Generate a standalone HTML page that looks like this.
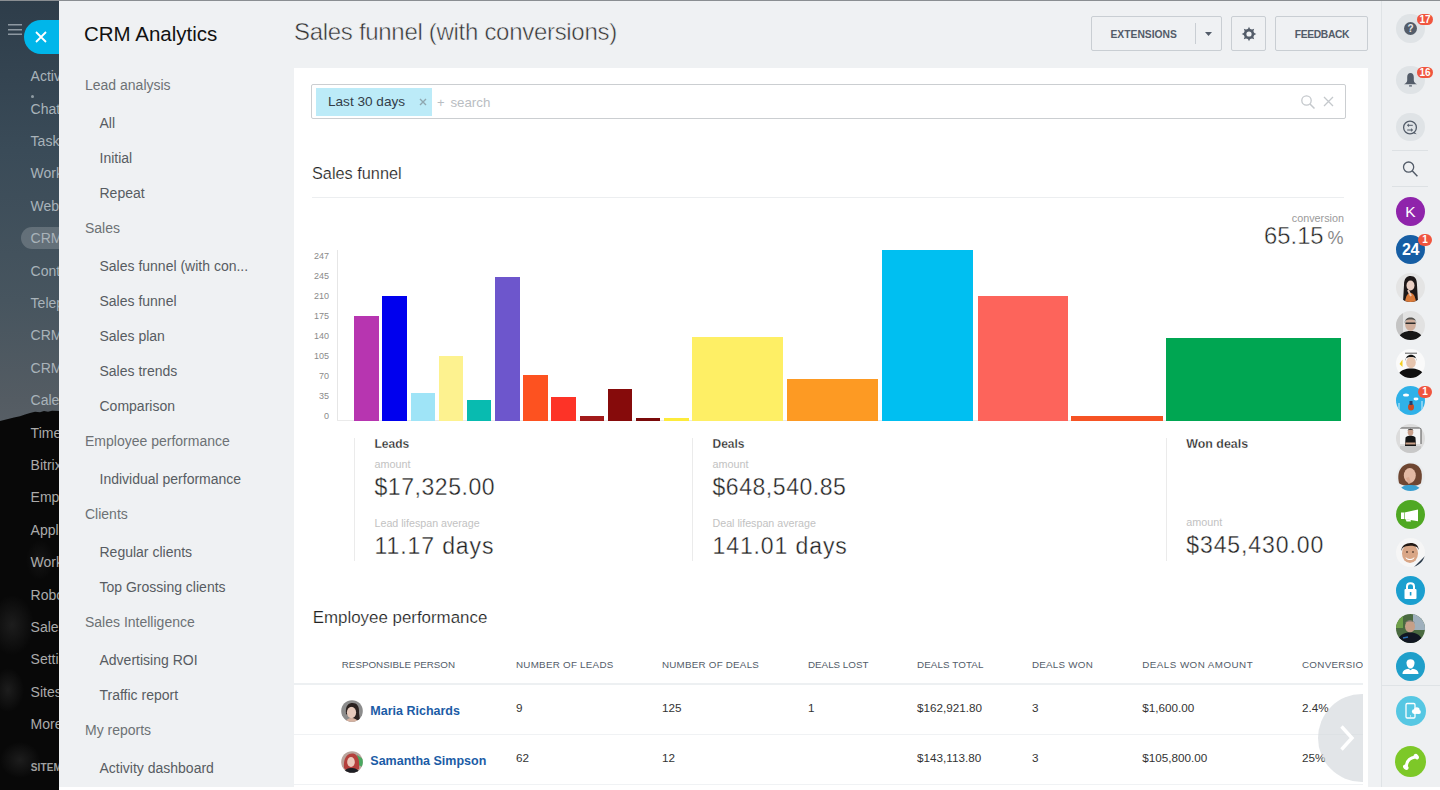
<!DOCTYPE html>
<html><head><meta charset="utf-8"><title>CRM Analytics</title>
<style>
html,body{margin:0;padding:0;width:1440px;height:790px;overflow:hidden;background:#eef0f3;font-family:'Liberation Sans', sans-serif}
.t{position:absolute;white-space:nowrap;font-family:'Liberation Sans', sans-serif}
.r{position:absolute}
</style></head><body>
<div class="r" style="left:0;top:0;width:59px;height:790px;background:linear-gradient(180deg,#2e3d4a 0px,#3a4b58 150px,#47555f 300px,#545c63 400px,#575e65 425px);overflow:hidden">
<svg width="59" height="790" style="position:absolute;left:0;top:0">
<defs><radialGradient id="tx"><stop offset="0" stop-color="#262626" stop-opacity="0.7"/><stop offset="1" stop-color="#262626" stop-opacity="0"/></radialGradient></defs><path d="M0 421 L8 419 L14 417.5 L20 416.3 L25 414.5 L30 413 L35 411.8 L40 412.3 L44 411 L48 411.8 L52 410.8 L59 411 L59 790 L0 790 Z" fill="#080808"/><ellipse cx="12" cy="625" rx="22" ry="30" fill="url(#tx)"/><ellipse cx="8" cy="690" rx="16" ry="22" fill="url(#tx)"/><ellipse cx="20" cy="760" rx="20" ry="18" fill="url(#tx)"/><ellipse cx="40" cy="560" rx="14" ry="20" fill="url(#tx)" opacity="0.6"/>
</svg></div>
<div class="r" style="left:21px;top:226.5px;width:60px;height:22px;border-radius:11px;background:rgba(255,255,255,0.18)"></div>
<div class="t" style="left:30.60px;top:69.10px;font-size:14px;line-height:14px;color:#a9b3ba;font-weight:400;letter-spacing:0px;">Activ</div>
<div class="t" style="left:30.60px;top:101.50px;font-size:14px;line-height:14px;color:#a9b3ba;font-weight:400;letter-spacing:0px;">Chat</div>
<div class="t" style="left:30.60px;top:133.90px;font-size:14px;line-height:14px;color:#a9b3ba;font-weight:400;letter-spacing:0px;">Task</div>
<div class="t" style="left:30.60px;top:166.30px;font-size:14px;line-height:14px;color:#a9b3ba;font-weight:400;letter-spacing:0px;">Work</div>
<div class="t" style="left:30.60px;top:198.70px;font-size:14px;line-height:14px;color:#a9b3ba;font-weight:400;letter-spacing:0px;">Web</div>
<div class="t" style="left:30.60px;top:231.10px;font-size:14px;line-height:14px;color:#a9b3ba;font-weight:400;letter-spacing:0px;">CRM</div>
<div class="t" style="left:30.60px;top:263.50px;font-size:14px;line-height:14px;color:#a9b3ba;font-weight:400;letter-spacing:0px;">Cont</div>
<div class="t" style="left:30.60px;top:295.90px;font-size:14px;line-height:14px;color:#a9b3ba;font-weight:400;letter-spacing:0px;">Telep</div>
<div class="t" style="left:30.60px;top:328.30px;font-size:14px;line-height:14px;color:#a9b3ba;font-weight:400;letter-spacing:0px;">CRM</div>
<div class="t" style="left:30.60px;top:360.70px;font-size:14px;line-height:14px;color:#a9b3ba;font-weight:400;letter-spacing:0px;">CRM</div>
<div class="t" style="left:30.60px;top:393.10px;font-size:14px;line-height:14px;color:#a9b3ba;font-weight:400;letter-spacing:0px;">Cale</div>
<div class="t" style="left:30.60px;top:425.50px;font-size:14px;line-height:14px;color:#ababab;font-weight:400;letter-spacing:0px;">Time</div>
<div class="t" style="left:30.60px;top:457.90px;font-size:14px;line-height:14px;color:#ababab;font-weight:400;letter-spacing:0px;">Bitrix</div>
<div class="t" style="left:30.60px;top:490.30px;font-size:14px;line-height:14px;color:#ababab;font-weight:400;letter-spacing:0px;">Emp</div>
<div class="t" style="left:30.60px;top:522.70px;font-size:14px;line-height:14px;color:#ababab;font-weight:400;letter-spacing:0px;">Appl</div>
<div class="t" style="left:30.60px;top:555.10px;font-size:14px;line-height:14px;color:#ababab;font-weight:400;letter-spacing:0px;">Work</div>
<div class="t" style="left:30.60px;top:587.50px;font-size:14px;line-height:14px;color:#ababab;font-weight:400;letter-spacing:0px;">Robo</div>
<div class="t" style="left:30.60px;top:619.90px;font-size:14px;line-height:14px;color:#ababab;font-weight:400;letter-spacing:0px;">Sales</div>
<div class="t" style="left:30.60px;top:652.30px;font-size:14px;line-height:14px;color:#ababab;font-weight:400;letter-spacing:0px;">Setti</div>
<div class="t" style="left:30.60px;top:684.70px;font-size:14px;line-height:14px;color:#ababab;font-weight:400;letter-spacing:0px;">Sites</div>
<div class="t" style="left:30.60px;top:717.10px;font-size:14px;line-height:14px;color:#ababab;font-weight:400;letter-spacing:0px;">More</div>
<div class="r" style="left:30.5px;top:95px;width:3px;height:3px;border-radius:50%;background:#8f9ba3"></div>
<div class="t" style="left:30.80px;top:763.00px;font-size:10px;line-height:10px;color:#a0a0a0;font-weight:700;letter-spacing:0.1px;">SITEMAP</div>
<svg class="r" style="left:7px;top:22px" width="16" height="14"><path d="M1 2.8 L15 2.8 M1 7.8 L15 7.8 M1 12.3 L15 12.3" stroke="#8d98a1" stroke-width="1.5"/></svg>
<div class="r" style="left:59px;top:0px;width:1322px;height:790px;background:#eff1f3;"></div>
<div class="r" style="left:1381px;top:0px;width:59px;height:790px;background:#eef0f2;border-left:1px solid #dfe3e6;box-sizing:border-box"></div>
<div class="r" style="left:0px;top:0px;width:1440px;height:1px;background:#8a8e92;"></div>
<div class="r" style="left:24px;top:20px;width:35px;height:34px;border-radius:17px 0 0 17px;background:#00b6ea"></div>
<svg class="r" style="left:35px;top:31px" width="12" height="12"><path d="M1 1 L11 11 M11 1 L1 11" stroke="#fff" stroke-width="1.8"/></svg>
<div class="t" style="left:84.00px;top:23.57px;font-size:20.5px;line-height:20.5px;color:#111;font-weight:400;letter-spacing:0px;">CRM Analytics</div>
<div class="t" style="left:85.00px;top:77.60px;font-size:14px;line-height:14px;color:#6d7175;font-weight:400;letter-spacing:0px;">Lead analysis</div>
<div class="t" style="left:99.50px;top:115.60px;font-size:14px;line-height:14px;color:#575c62;font-weight:400;letter-spacing:0px;">All</div>
<div class="t" style="left:99.50px;top:150.60px;font-size:14px;line-height:14px;color:#575c62;font-weight:400;letter-spacing:0px;">Initial</div>
<div class="t" style="left:99.50px;top:185.60px;font-size:14px;line-height:14px;color:#575c62;font-weight:400;letter-spacing:0px;">Repeat</div>
<div class="t" style="left:85.00px;top:220.60px;font-size:14px;line-height:14px;color:#6d7175;font-weight:400;letter-spacing:0px;">Sales</div>
<div class="t" style="left:99.50px;top:258.60px;font-size:14px;line-height:14px;color:#575c62;font-weight:400;letter-spacing:0px;">Sales funnel (with con...</div>
<div class="t" style="left:99.50px;top:293.60px;font-size:14px;line-height:14px;color:#575c62;font-weight:400;letter-spacing:0px;">Sales funnel</div>
<div class="t" style="left:99.50px;top:328.60px;font-size:14px;line-height:14px;color:#575c62;font-weight:400;letter-spacing:0px;">Sales plan</div>
<div class="t" style="left:99.50px;top:363.60px;font-size:14px;line-height:14px;color:#575c62;font-weight:400;letter-spacing:0px;">Sales trends</div>
<div class="t" style="left:99.50px;top:398.60px;font-size:14px;line-height:14px;color:#575c62;font-weight:400;letter-spacing:0px;">Comparison</div>
<div class="t" style="left:85.00px;top:433.60px;font-size:14px;line-height:14px;color:#6d7175;font-weight:400;letter-spacing:0px;">Employee performance</div>
<div class="t" style="left:99.50px;top:471.60px;font-size:14px;line-height:14px;color:#575c62;font-weight:400;letter-spacing:0px;">Individual performance</div>
<div class="t" style="left:85.00px;top:506.60px;font-size:14px;line-height:14px;color:#6d7175;font-weight:400;letter-spacing:0px;">Clients</div>
<div class="t" style="left:99.50px;top:544.60px;font-size:14px;line-height:14px;color:#575c62;font-weight:400;letter-spacing:0px;">Regular clients</div>
<div class="t" style="left:99.50px;top:579.60px;font-size:14px;line-height:14px;color:#575c62;font-weight:400;letter-spacing:0px;">Top Grossing clients</div>
<div class="t" style="left:85.00px;top:614.60px;font-size:14px;line-height:14px;color:#6d7175;font-weight:400;letter-spacing:0px;">Sales Intelligence</div>
<div class="t" style="left:99.50px;top:652.60px;font-size:14px;line-height:14px;color:#575c62;font-weight:400;letter-spacing:0px;">Advertising ROI</div>
<div class="t" style="left:99.50px;top:687.60px;font-size:14px;line-height:14px;color:#575c62;font-weight:400;letter-spacing:0px;">Traffic report</div>
<div class="t" style="left:85.00px;top:722.60px;font-size:14px;line-height:14px;color:#6d7175;font-weight:400;letter-spacing:0px;">My reports</div>
<div class="t" style="left:99.50px;top:760.60px;font-size:14px;line-height:14px;color:#575c62;font-weight:400;letter-spacing:0px;">Activity dashboard</div>
<div class="t" style="left:294.00px;top:19.60px;font-size:24px;line-height:24px;color:#333;font-weight:400;letter-spacing:-0.3px;-webkit-text-stroke:0.5px #eff1f3;">Sales funnel (with conversions)</div>
<div class="r" style="left:1091px;top:16px;width:131px;height:35px;border:1px solid #c9ced3;border-radius:2px;box-sizing:border-box"></div>
<div class="r" style="left:1195px;top:23px;width:1px;height:21px;background:#c9ced3;"></div>
<svg class="r" style="left:1205px;top:32px" width="7" height="4"><path d="M0 0 L7 0 L3.5 4 Z" fill="#535c69"/></svg>
<div class="t" style="left:1110.50px;top:30.24px;font-size:10.3px;line-height:10.3px;color:#535c69;font-weight:700;letter-spacing:0px;">EXTENSIONS</div>
<div class="r" style="left:1231px;top:16px;width:35px;height:35px;border:1px solid #c9ced3;border-radius:2px;box-sizing:border-box"></div>
<svg class="r" style="left:1240.8px;top:25.8px" width="16" height="16"><path fill-rule="evenodd" fill="#535c69" d="M6.05 3.29 L7.06 2.68 L8.00 0.70 L8.94 2.68 L9.95 3.29 L11.10 3.58 L13.16 2.84 L12.42 4.90 L12.71 6.05 L13.32 7.06 L15.30 8.00 L13.32 8.94 L12.71 9.95 L12.42 11.10 L13.16 13.16 L11.10 12.42 L9.95 12.71 L8.94 13.32 L8.00 15.30 L7.06 13.32 L6.05 12.71 L4.90 12.42 L2.84 13.16 L3.58 11.10 L3.29 9.95 L2.68 8.94 L0.70 8.00 L2.68 7.06 L3.29 6.05 L3.58 4.90 L2.84 2.84 L4.90 3.58 Z M8 5.4 A2.6 2.6 0 1 0 8 10.6 A2.6 2.6 0 1 0 8 5.4 Z"/></svg>
<div class="r" style="left:1275px;top:16px;width:93px;height:35px;border:1px solid #c9ced3;border-radius:2px;box-sizing:border-box"></div>
<div class="t" style="left:1294.75px;top:30.24px;font-size:10.3px;line-height:10.3px;color:#535c69;font-weight:700;letter-spacing:-0.35px;">FEEDBACK</div>
<div class="r" style="left:294px;top:68px;width:1074px;height:720px;background:#ffffff;"></div>
<div class="r" style="left:311px;top:84px;width:1035px;height:35px;border:1px solid #cbced1;border-radius:2px;box-sizing:border-box;background:#fff"></div>
<div class="r" style="left:316px;top:88px;width:116px;height:28px;background:#bcebf8;"></div>
<div class="t" style="left:328.00px;top:95.44px;font-size:13.6px;line-height:13.6px;color:#333d48;font-weight:400;letter-spacing:0px;">Last 30 days</div>
<svg class="r" style="left:419px;top:98px" width="8" height="8"><path d="M1 1 L7 7 M7 1 L1 7" stroke="#8fa7b0" stroke-width="1.4"/></svg>
<div class="t" style="left:437.00px;top:95.95px;font-size:13px;line-height:13px;color:#b9bdc2;font-weight:400;letter-spacing:0px;">+</div>
<div class="t" style="left:450.40px;top:95.69px;font-size:13.3px;line-height:13.3px;color:#b9bdc2;font-weight:400;letter-spacing:0px;">search</div>
<svg class="r" style="left:1300px;top:94px" width="16" height="16"><circle cx="6.5" cy="6.5" r="4.7" fill="none" stroke="#c4c8cc" stroke-width="1.3"/><path d="M10 10 L14.5 14.5" stroke="#c4c8cc" stroke-width="1.5"/></svg>
<svg class="r" style="left:1323px;top:96px" width="11" height="11"><path d="M1 1 L10 10 M10 1 L1 10" stroke="#c4c8cc" stroke-width="1.3"/></svg>
<div class="t" style="left:312.00px;top:165.15px;font-size:16.3px;line-height:16.3px;color:#222;font-weight:400;letter-spacing:0px;-webkit-text-stroke:0.2px #fff;">Sales funnel</div>
<div class="r" style="left:312px;top:197px;width:1032px;height:1px;background:#eceef0;"></div>
<div class="t" style="right:96.00px;top:213.32px;font-size:10.8px;line-height:10.8px;color:#9a9a9a;font-weight:400;letter-spacing:0px;">conversion</div>
<div class="t" style="right:116.40px;top:224.07px;font-size:23.8px;line-height:23.8px;color:#222;font-weight:400;letter-spacing:0px;-webkit-text-stroke:0.45px #fff;">65.15</div>
<div class="t" style="right:96.50px;top:229.00px;font-size:18px;line-height:18px;color:#8a8a8a;font-weight:400;letter-spacing:0px;">%</div>
<div class="r" style="left:337px;top:250px;width:1px;height:171px;background:#e6e6e6;"></div>
<div class="r" style="left:337px;top:420px;width:1004px;height:1px;background:#eaeaea;"></div>
<div class="t" style="right:1111.00px;top:252.05px;font-size:9px;line-height:9px;color:#8a8a8a;font-weight:400;letter-spacing:0px;">247</div>
<div class="t" style="right:1111.00px;top:271.65px;font-size:9px;line-height:9px;color:#8a8a8a;font-weight:400;letter-spacing:0px;">245</div>
<div class="t" style="right:1111.00px;top:291.65px;font-size:9px;line-height:9px;color:#8a8a8a;font-weight:400;letter-spacing:0px;">210</div>
<div class="t" style="right:1111.00px;top:311.65px;font-size:9px;line-height:9px;color:#8a8a8a;font-weight:400;letter-spacing:0px;">175</div>
<div class="t" style="right:1111.00px;top:331.65px;font-size:9px;line-height:9px;color:#8a8a8a;font-weight:400;letter-spacing:0px;">140</div>
<div class="t" style="right:1111.00px;top:351.65px;font-size:9px;line-height:9px;color:#8a8a8a;font-weight:400;letter-spacing:0px;">105</div>
<div class="t" style="right:1111.00px;top:371.65px;font-size:9px;line-height:9px;color:#8a8a8a;font-weight:400;letter-spacing:0px;">70</div>
<div class="t" style="right:1111.00px;top:391.65px;font-size:9px;line-height:9px;color:#8a8a8a;font-weight:400;letter-spacing:0px;">35</div>
<div class="t" style="right:1111.00px;top:411.65px;font-size:9px;line-height:9px;color:#8a8a8a;font-weight:400;letter-spacing:0px;">0</div>
<div class="r" style="left:354.3px;top:316.0px;width:24.6px;height:105.0px;background:#b735b0"></div>
<div class="r" style="left:382.0px;top:295.8px;width:25.0px;height:125.2px;background:#0000ee"></div>
<div class="r" style="left:410.8px;top:393.2px;width:24.1px;height:27.8px;background:#9fe4f7"></div>
<div class="r" style="left:439.0px;top:356.2px;width:23.7px;height:64.8px;background:#fdf28f"></div>
<div class="r" style="left:467.0px;top:400.3px;width:23.9px;height:20.7px;background:#08bbb0"></div>
<div class="r" style="left:495.2px;top:277.2px;width:24.7px;height:143.8px;background:#6d56cc"></div>
<div class="r" style="left:523.2px;top:375.1px;width:24.7px;height:45.9px;background:#fd5220"></div>
<div class="r" style="left:551.1px;top:396.8px;width:24.8px;height:24.2px;background:#fd3327"></div>
<div class="r" style="left:580.2px;top:416.2px;width:23.6px;height:4.8px;background:#a21a1a"></div>
<div class="r" style="left:608.1px;top:389.3px;width:23.7px;height:31.7px;background:#860b0b"></div>
<div class="r" style="left:636.1px;top:418.1px;width:23.7px;height:2.9px;background:#7a0a0a"></div>
<div class="r" style="left:664.1px;top:418.2px;width:24.5px;height:2.8px;background:#fdeb3b"></div>
<div class="r" style="left:692.0px;top:337.4px;width:91.0px;height:83.6px;background:#feef65"></div>
<div class="r" style="left:787.0px;top:379.0px;width:91.0px;height:42.0px;background:#fd9a23"></div>
<div class="r" style="left:882.0px;top:249.6px;width:91.0px;height:171.4px;background:#00bff1"></div>
<div class="r" style="left:977.5px;top:295.9px;width:90.7px;height:125.1px;background:#fd645b"></div>
<div class="r" style="left:1071.0px;top:415.6px;width:91.8px;height:5.4px;background:#f65324"></div>
<div class="r" style="left:1166.3px;top:337.5px;width:174.8px;height:83.5px;background:#00a652"></div>
<div class="r" style="left:354px;top:438px;width:1px;height:123px;background:#ebebeb;"></div>
<div class="r" style="left:692px;top:438px;width:1px;height:123px;background:#ebebeb;"></div>
<div class="r" style="left:1166px;top:438px;width:1px;height:123px;background:#ebebeb;"></div>
<div class="t" style="left:374.50px;top:437.80px;font-size:12px;line-height:12px;color:#222;font-weight:700;letter-spacing:0px;-webkit-text-stroke:0.3px #fff;">Leads</div>
<div class="t" style="left:374.50px;top:458.82px;font-size:10.8px;line-height:10.8px;color:#c2c2c2;font-weight:400;letter-spacing:0px;">amount</div>
<div class="t" style="left:374.50px;top:476.15px;font-size:23px;line-height:23px;color:#222;font-weight:400;letter-spacing:0.55px;-webkit-text-stroke:0.35px #fff;">$17,325.00</div>
<div class="t" style="left:374.50px;top:517.90px;font-size:10.7px;line-height:10.7px;color:#c2c2c2;font-weight:400;letter-spacing:0px;">Lead lifespan average</div>
<div class="t" style="left:374.50px;top:534.85px;font-size:23px;line-height:23px;color:#222;font-weight:400;letter-spacing:0.9px;-webkit-text-stroke:0.35px #fff;">11.17 days</div>
<div class="t" style="left:712.50px;top:437.80px;font-size:12px;line-height:12px;color:#222;font-weight:700;letter-spacing:0px;-webkit-text-stroke:0.3px #fff;">Deals</div>
<div class="t" style="left:712.50px;top:458.82px;font-size:10.8px;line-height:10.8px;color:#c2c2c2;font-weight:400;letter-spacing:0px;">amount</div>
<div class="t" style="left:712.50px;top:476.15px;font-size:23px;line-height:23px;color:#222;font-weight:400;letter-spacing:0.55px;-webkit-text-stroke:0.35px #fff;">$648,540.85</div>
<div class="t" style="left:712.50px;top:517.90px;font-size:10.7px;line-height:10.7px;color:#c2c2c2;font-weight:400;letter-spacing:0px;">Deal lifespan average</div>
<div class="t" style="left:712.50px;top:534.85px;font-size:23px;line-height:23px;color:#222;font-weight:400;letter-spacing:0.9px;-webkit-text-stroke:0.35px #fff;">141.01 days</div>
<div class="t" style="left:1186.30px;top:437.76px;font-size:12.4px;line-height:12.4px;color:#222;font-weight:700;letter-spacing:0px;-webkit-text-stroke:0.3px #fff;">Won deals</div>
<div class="t" style="left:1186.30px;top:516.82px;font-size:10.8px;line-height:10.8px;color:#c2c2c2;font-weight:400;letter-spacing:0px;">amount</div>
<div class="t" style="left:1186.30px;top:533.95px;font-size:23px;line-height:23px;color:#222;font-weight:400;letter-spacing:0.9px;-webkit-text-stroke:0.35px #fff;">$345,430.00</div>
<div class="t" style="left:312.70px;top:610.03px;font-size:16.9px;line-height:16.9px;color:#222;font-weight:400;letter-spacing:0px;-webkit-text-stroke:0.2px #fff;">Employee performance</div>
<div class="r" style="left:294px;top:640px;width:1069px;height:148px;overflow:hidden">
<div class="t" style="left:47.80px;top:20.17px;font-size:9.8px;line-height:9.8px;color:#535c69;font-weight:400;letter-spacing:0px;">RESPONSIBLE PERSON</div>
<div class="t" style="left:222.00px;top:20.17px;font-size:9.8px;line-height:9.8px;color:#535c69;font-weight:400;letter-spacing:0.26px;">NUMBER OF LEADS</div>
<div class="t" style="left:368.00px;top:20.17px;font-size:9.8px;line-height:9.8px;color:#535c69;font-weight:400;letter-spacing:0.23px;">NUMBER OF DEALS</div>
<div class="t" style="left:514.00px;top:20.17px;font-size:9.8px;line-height:9.8px;color:#535c69;font-weight:400;letter-spacing:0px;">DEALS LOST</div>
<div class="t" style="left:623.00px;top:20.17px;font-size:9.8px;line-height:9.8px;color:#535c69;font-weight:400;letter-spacing:0.1px;">DEALS TOTAL</div>
<div class="t" style="left:738.00px;top:20.17px;font-size:9.8px;line-height:9.8px;color:#535c69;font-weight:400;letter-spacing:0.24px;">DEALS WON</div>
<div class="t" style="left:848.30px;top:20.17px;font-size:9.8px;line-height:9.8px;color:#535c69;font-weight:400;letter-spacing:0.46px;">DEALS WON AMOUNT</div>
<div class="t" style="left:1008.00px;top:20.17px;font-size:9.8px;line-height:9.8px;color:#535c69;font-weight:400;letter-spacing:0.3px;">CONVERSION</div>
<div class="r" style="left:0px;top:42.5px;width:1069px;height:2px;background:#edf0f2;"></div>
<div class="r" style="left:0px;top:94px;width:1069px;height:1px;background:#f0f2f4;"></div>
<div class="r" style="left:0px;top:144px;width:1069px;height:1px;background:#f0f2f4;"></div>
<svg style="position:absolute;left:46.69999999999999px;top:60px" width="22" height="22" viewBox="0 0 22 22"><defs><clipPath id="tc711"><circle cx="11" cy="11" r="10.8"/></clipPath></defs><g clip-path="url(#tc711)"><rect width="22" height="22" fill="#8c8c8c"/><path d="M5 14 C4 5 8 3 11.5 3 C16 3 18.5 6 18 13 L19 20 L14 20 Z" fill="#2b2220"/><ellipse cx="10.5" cy="12.5" rx="4.6" ry="5.8" fill="#e6c9bb"/><path d="M6 9 C8 6 13 6 15 8 L15 6 C12 4 8 4.5 6 7 Z" fill="#2b2220"/><path d="M4 22 C6 18.5 9 18 11 18 C13 18 16 19 17 22 Z" fill="#d6b2a0"/></g></svg>
<div class="t" style="left:76.30px;top:64.88px;font-size:12.5px;line-height:12.5px;color:#1b5ca6;font-weight:700;letter-spacing:0px;">Maria Richards</div>
<div class="t" style="left:222.00px;top:62.05px;font-size:11.7px;line-height:11.7px;color:#333;font-weight:400;letter-spacing:0px;">9</div>
<div class="t" style="left:368.00px;top:62.05px;font-size:11.7px;line-height:11.7px;color:#333;font-weight:400;letter-spacing:0px;">125</div>
<div class="t" style="left:514.00px;top:62.05px;font-size:11.7px;line-height:11.7px;color:#333;font-weight:400;letter-spacing:0px;">1</div>
<div class="t" style="left:623.00px;top:62.05px;font-size:11.7px;line-height:11.7px;color:#333;font-weight:400;letter-spacing:0px;">$162,921.80</div>
<div class="t" style="left:738.00px;top:62.05px;font-size:11.7px;line-height:11.7px;color:#333;font-weight:400;letter-spacing:0px;">3</div>
<div class="t" style="left:848.30px;top:62.05px;font-size:11.7px;line-height:11.7px;color:#333;font-weight:400;letter-spacing:0px;">$1,600.00</div>
<div class="t" style="left:1008.00px;top:62.05px;font-size:11.7px;line-height:11.7px;color:#333;font-weight:400;letter-spacing:0px;">2.4%</div>
<svg style="position:absolute;left:46.69999999999999px;top:110.5px" width="22" height="22" viewBox="0 0 22 22"><defs><clipPath id="tc761"><circle cx="11" cy="11" r="10.8"/></clipPath></defs><g clip-path="url(#tc761)"><rect width="22" height="22" fill="#b9a49c"/><path d="M16 4 L22 8 L22 16 L17 14 Z" fill="#4aa860"/><path d="M3 17 C2 6 7 2.5 11 2.5 C15.5 2.5 19 6 18 18 L14 20 L6 20 Z" fill="#b4403c"/><ellipse cx="10" cy="11" rx="3.8" ry="5" fill="#ecc9bc"/><path d="M2 22 C4 18 7 17 10.5 17 C14 17 17 18 19 22 Z" fill="#1e1e24"/></g></svg>
<div class="t" style="left:76.30px;top:115.38px;font-size:12.5px;line-height:12.5px;color:#1b5ca6;font-weight:700;letter-spacing:0px;">Samantha Simpson</div>
<div class="t" style="left:222.00px;top:111.56px;font-size:11.7px;line-height:11.7px;color:#333;font-weight:400;letter-spacing:0px;">62</div>
<div class="t" style="left:368.00px;top:111.56px;font-size:11.7px;line-height:11.7px;color:#333;font-weight:400;letter-spacing:0px;">12</div>
<div class="t" style="left:514.00px;top:111.56px;font-size:11.7px;line-height:11.7px;color:#333;font-weight:400;letter-spacing:0px;"></div>
<div class="t" style="left:623.00px;top:111.56px;font-size:11.7px;line-height:11.7px;color:#333;font-weight:400;letter-spacing:0px;">$143,113.80</div>
<div class="t" style="left:738.00px;top:111.56px;font-size:11.7px;line-height:11.7px;color:#333;font-weight:400;letter-spacing:0px;">3</div>
<div class="t" style="left:848.30px;top:111.56px;font-size:11.7px;line-height:11.7px;color:#333;font-weight:400;letter-spacing:0px;">$105,800.00</div>
<div class="t" style="left:1008.00px;top:111.56px;font-size:11.7px;line-height:11.7px;color:#333;font-weight:400;letter-spacing:0px;">25%</div>
</div>
<div class="r" style="left:1318px;top:694px;width:45px;height:88px;overflow:hidden"><div style="position:absolute;left:0;top:0;width:88px;height:88px;border-radius:50%;background:rgba(210,215,219,0.65)"></div></div>
<svg class="r" style="left:1338px;top:724px" width="18" height="28"><path d="M3.5 2.5 L14 14 L3.5 25.5" fill="none" stroke="#fff" stroke-width="3.4"/></svg>
<div class="r" style="left:1396.25px;top:14.25px;width:28.5px;height:28.5px;border-radius:50%;background:#dfe3e6;overflow:hidden"></div>
<div class="r" style="left:1403.8px;top:21.8px;width:13.4px;height:13.4px;border-radius:50%;background:#535c69;color:#e6e9eb;font-size:10px;line-height:13.4px;font-weight:700;text-align:center;font-family:'Liberation Sans', sans-serif">?</div>
<div class="r" style="left:1417px;top:13.8px;width:16px;height:11px;border-radius:5.5px;background:#f0553f;color:#fff;font-size:10px;line-height:11px;font-weight:700;text-align:center;font-family:'Liberation Sans', sans-serif">17</div>
<div class="r" style="left:1396.25px;top:65.75px;width:28.5px;height:28.5px;border-radius:50%;background:#dfe3e6;overflow:hidden"></div>
<svg class="r" style="left:1403px;top:72px" width="15" height="16" viewBox="0 0 15 16"><path d="M7.5 1 C5.2 1 4.2 2.8 4.2 5.3 L4.2 8.2 C4.2 9.9 3 11.2 1 12.2 L14 12.2 C12 11.2 10.8 9.9 10.8 8.2 L10.8 5.3 C10.8 2.8 9.8 1 7.5 1 Z" fill="#535c69"/><rect x="6" y="13.3" width="3" height="1.2" rx="0.5" fill="#535c69"/></svg>
<div class="r" style="left:1417px;top:67.2px;width:16px;height:11px;border-radius:5.5px;background:#f0553f;color:#fff;font-size:10px;line-height:11px;font-weight:700;text-align:center;font-family:'Liberation Sans', sans-serif">16</div>
<div class="r" style="left:1396.25px;top:112.75px;width:28.5px;height:28.5px;border-radius:50%;background:#dfe3e6;overflow:hidden"></div>
<svg class="r" style="left:1401.5px;top:118.8px" width="17" height="17" viewBox="0 0 17 17"><circle cx="8" cy="8.5" r="6.4" fill="none" stroke="#535c69" stroke-width="1.3"/><path d="M12.3 13 L14.8 15.2 L11.5 14.6 Z" fill="#535c69"/><path d="M6.2 6.3 L10.8 6.3 M5.2 11 L9.8 11" stroke="#535c69" stroke-width="1"/><path d="M6.6 5 L5.2 6.3 L6.6 7.6 Z M9.4 9.7 L10.8 11 L9.4 12.3 Z" fill="#535c69" stroke="#535c69" stroke-width="0.6"/></svg>
<div class="r" style="left:1392px;top:150px;width:36px;height:1px;background:#dde1e4;"></div>
<svg class="r" style="left:1402px;top:160.5px" width="17" height="17"><circle cx="6.6" cy="6.1" r="5.1" fill="none" stroke="#535c69" stroke-width="1.3"/><path d="M10.2 9.8 L15.4 15.2" stroke="#535c69" stroke-width="1.5"/></svg>
<div class="r" style="left:1392px;top:186px;width:36px;height:1px;background:#dde1e4;"></div>
<div class="r" style="left:1396.0px;top:197.0px;width:29px;height:29px;border-radius:50%;background:#8f24ab;overflow:hidden"><div style="font-family:'Liberation Sans', sans-serif;color:#fff;font-size:15.5px;line-height:29px;text-align:center">K</div></div>
<div class="r" style="left:1396.0px;top:235.0px;width:29px;height:29px;border-radius:50%;background:#165ea4;overflow:hidden"><div style="font-family:'Liberation Sans', sans-serif;color:#fff;font-size:16px;line-height:30px;text-align:center;font-weight:700;letter-spacing:-0.5px">24</div></div>
<div class="r" style="left:1418px;top:234px;width:14px;height:12px;border-radius:6.0px;background:#f0553f;color:#fff;font-size:10px;line-height:12px;font-weight:700;text-align:center;font-family:'Liberation Sans', sans-serif">1</div>
<svg class="r" style="left:1396.0px;top:272.5px" width="29" height="29" viewBox="0 0 29 29"><defs><clipPath id="c287"><circle cx="14.5" cy="14.5" r="14.5"/></clipPath></defs><g clip-path="url(#c287)"><rect width="29" height="29" fill="#e4e4e4"/><path d="M7 29 L8 12 C8 5 11 3 14.5 3 C19 3 21 6 21 12 L22 29 Z" fill="#1d1818"/><ellipse cx="14.5" cy="12.5" rx="4" ry="5" fill="#ead0c4"/><path d="M9 29 C10 22 12 20 14.5 20 C17 20 19 22 20 29 Z" fill="#d97a3a"/><path d="M12 17 L15 23" stroke="#e9c8b8" stroke-width="2"/></g></svg>
<svg class="r" style="left:1396.0px;top:310.5px" width="29" height="29" viewBox="0 0 29 29"><defs><clipPath id="c325"><circle cx="14.5" cy="14.5" r="14.5"/></clipPath></defs><g clip-path="url(#c325)"><rect width="29" height="29" fill="#e2e2e2"/><rect width="7" height="29" fill="#c4c4c4"/><ellipse cx="14.5" cy="13.5" rx="5.4" ry="6.5" fill="#cfae9c"/><path d="M8.8 12 C8 4.5 21 4.5 20.2 12 L19.5 9.5 C17.5 8 11.5 8 9.5 9.5 Z" fill="#55524f"/><path d="M9.5 12.2 L19.5 12.2" stroke="#2a2a2a" stroke-width="1.4"/><path d="M2 29 C3 22 9 20 14.5 20 C20 20 26 22 27 29 Z" fill="#161616"/></g></svg>
<svg class="r" style="left:1396.0px;top:348.5px" width="29" height="29" viewBox="0 0 29 29"><defs><clipPath id="c363"><circle cx="14.5" cy="14.5" r="14.5"/></clipPath></defs><g clip-path="url(#c363)"><rect width="29" height="29" fill="#fafafa"/><ellipse cx="15" cy="13.5" rx="4.8" ry="5.8" fill="#e6c5ae"/><path d="M9.6 12 C9 3.5 21 3.5 20.4 12 L19.8 9 C17.5 7.5 12.5 7.5 10.2 9 Z" fill="#111"/><path d="M1 29 C2 21 10 19.5 15 19.5 C20 19.5 28 21 29 29 Z" fill="#0f0f0f"/><path d="M3.5 15 L6.5 10.5 L6.5 18 Z" fill="#f5d020"/><path d="M9 4.2 L21 4.2" stroke="#333" stroke-width="0.8"/></g></svg>
<svg class="r" style="left:1396.0px;top:385.5px" width="29" height="29" viewBox="0 0 29 29"><defs><clipPath id="c400"><circle cx="14.5" cy="14.5" r="14.5"/></clipPath></defs><g clip-path="url(#c400)"><rect width="29" height="29" fill="#2fb1e8"/><ellipse cx="10" cy="9" rx="3" ry="1.6" fill="#fff"/><ellipse cx="20" cy="13" rx="2.5" ry="1.4" fill="#fff"/><path d="M3 29 L3 17 M26 29 L26 15" stroke="#9fdcf7" stroke-width="1.5"/><ellipse cx="15" cy="21" rx="3" ry="3.5" fill="#c94a22"/><rect x="13.5" y="15" width="3" height="4" fill="#21406e"/></g></svg>
<div class="r" style="left:1418px;top:386px;width:14px;height:12px;border-radius:6.0px;background:#f0553f;color:#fff;font-size:10px;line-height:12px;font-weight:700;text-align:center;font-family:'Liberation Sans', sans-serif">1</div>
<svg class="r" style="left:1396.0px;top:423.5px" width="29" height="29" viewBox="0 0 29 29"><defs><clipPath id="c438"><circle cx="14.5" cy="14.5" r="14.5"/></clipPath></defs><g clip-path="url(#c438)"><rect width="29" height="29" fill="#dcdcdc"/><rect x="4" y="4" width="21" height="16" fill="#f4f4f4"/><path d="M4 4 L25 4 L25 20" fill="none" stroke="#555" stroke-width="1"/><ellipse cx="14.5" cy="8.3" rx="2.8" ry="3.4" fill="#caa08a"/><path d="M11.7 7 C11.7 4 17.3 4 17.3 7 L16.6 6 C15.5 5.5 13.5 5.5 12.4 6 Z" fill="#222"/><path d="M9 22 L9.5 13.5 C11 12 13 11.8 14.5 11.8 C16 11.8 18 12 19.5 13.5 L20 22 Z" fill="#151515"/><path d="M9.5 19.5 L19.5 19.5" stroke="#c9a088" stroke-width="2"/><rect x="4" y="22" width="21" height="7" fill="#c8c8c8"/></g></svg>
<svg class="r" style="left:1396.0px;top:461.5px" width="29" height="29" viewBox="0 0 29 29"><defs><clipPath id="c476"><circle cx="14.5" cy="14.5" r="14.5"/></clipPath></defs><g clip-path="url(#c476)"><rect width="29" height="29" fill="#e9ecee"/><path d="M3 21 C0 8 7 1.5 14.5 1.5 C23 1.5 28 8 25 21 C23 25 6 25 3 21 Z" fill="#6e4632"/><ellipse cx="13.8" cy="13.5" rx="6" ry="7.5" fill="#e2b9a4"/><path d="M9 6.5 C11 4.5 18 4.5 20 7.5 L20 5 C17 3 11 3 9 5 Z" fill="#6e4632"/><path d="M10 16 L12.5 22 L15 21 L13 15 Z" fill="#d9a890"/><path d="M3 29 C5 24 9 23 14 23 C19 23 23 24 26 29 Z" fill="#3a9fd0"/></g></svg>
<div class="r" style="left:1396.0px;top:499.5px;width:29px;height:29px;border-radius:50%;background:#4fa823;overflow:hidden"><svg width="29" height="29"><path d="M5 12.4 L8.5 12.4 L22 9.4 L22 21.3 L8.5 19 L5 19 Z" fill="#fff"/><path d="M9.5 19 L10.5 21.5 L15 21.5 L14.5 19.8 Z" fill="#fff"/><path d="M8.5 12.4 L8.5 19" stroke="#4fa823" stroke-width="0.6"/></svg></div>
<svg class="r" style="left:1396.0px;top:537.5px" width="29" height="29" viewBox="0 0 29 29"><defs><clipPath id="c552"><circle cx="14.5" cy="14.5" r="14.5"/></clipPath></defs><g clip-path="url(#c552)"><rect width="29" height="29" fill="#f6f6f6"/><path d="M18 29 L29 18 L29 29 Z" fill="#2b3a4a"/><ellipse cx="14" cy="15.5" rx="8" ry="9.5" fill="#d9a686"/><path d="M5.5 13 C4.5 3 23.5 2 22.5 12 L21.5 9.5 C18 7 10 7 6.5 10 Z" fill="#241a15"/><path d="M9.5 19 C12 21.5 16 21.5 18.5 19 L18 20.5 C16 22.5 12 22.5 10 20.5 Z" fill="#fff"/><ellipse cx="11" cy="14" rx="1" ry="0.8" fill="#3a2a20"/><ellipse cx="17" cy="14" rx="1" ry="0.8" fill="#3a2a20"/></g></svg>
<div class="r" style="left:1396.0px;top:575.5px;width:29px;height:29px;border-radius:50%;background:#1b9fcf;overflow:hidden"><svg width="29" height="29"><rect x="8.5" y="13" width="12" height="10" rx="1" fill="#fff"/><path d="M11 13 L11 10.5 C11 6.3 18 6.3 18 10.5 L18 13" fill="none" stroke="#fff" stroke-width="2"/><rect x="13.8" y="16" width="1.6" height="3.5" fill="#1b9fcf"/></svg></div>
<svg class="r" style="left:1396.0px;top:613.5px" width="29" height="29" viewBox="0 0 29 29"><defs><clipPath id="c628"><circle cx="14.5" cy="14.5" r="14.5"/></clipPath></defs><g clip-path="url(#c628)"><rect width="29" height="29" fill="#4a6a40"/><rect x="17" y="0" width="12" height="16" fill="#9fb0bd"/><rect x="0" y="0" width="7" height="14" fill="#6fa04a"/><ellipse cx="14" cy="12.5" rx="5" ry="6" fill="#c69f88"/><path d="M9 10 C9 5 19 5 19 10 L18 8 C16.5 7.2 11.5 7.2 10 8 Z" fill="#7d7873"/><path d="M1 29 C2 21 8 18.5 14 18.5 C20 18.5 26 21 27 29 Z" fill="#111722"/><path d="M7 24 L12 23" stroke="#2d6fb0" stroke-width="1.5"/></g></svg>
<div class="r" style="left:1396.0px;top:651.5px;width:29px;height:29px;border-radius:50%;background:#1f9fca;overflow:hidden"><svg width="29" height="29"><path d="M10.5 10.5 C10.5 6 18.5 6 18.5 10.5 C18.5 14 16.8 16.5 14.5 16.5 C12.2 16.5 10.5 14 10.5 10.5 Z" fill="#fff"/><path d="M6.5 22 C6.5 18.5 9 17.5 12.5 16.8 L14.5 18.2 L16.5 16.8 C20 17.5 22.5 18.5 22.5 22 Z" fill="#fff"/></svg></div>
<div class="r" style="left:1382px;top:685px;width:58px;height:1px;background:#dfe3e6;"></div>
<div class="r" style="left:1395.5px;top:695.5px;width:30px;height:30px;border-radius:50%;background:#56c7e3;overflow:hidden"><svg width="30" height="30"><rect x="10" y="7.5" width="9" height="14.5" rx="1.2" fill="none" stroke="#fff" stroke-width="1.3"/><path d="M14 20 L15 20" stroke="#fff" stroke-width="1.2"/><circle cx="18.2" cy="15.6" r="2.3" fill="#fff"/><circle cx="20.8" cy="14" r="2.8" fill="#fff"/><circle cx="23" cy="16" r="1.9" fill="#fff"/><rect x="18" y="15.5" width="5" height="2.4" fill="#fff"/></svg></div>
<div class="r" style="left:1395.0px;top:746.0px;width:31px;height:31px;border-radius:50%;background:#7dc828;overflow:hidden"><svg width="31" height="31"><path d="M11.4 20.3 Q11.8 12.2 20.3 11" fill="none" stroke="#fff" stroke-width="3"/><ellipse cx="10.8" cy="21.3" rx="2.2" ry="3" transform="rotate(-50 10.8 21.3)" fill="#fff"/><ellipse cx="21.3" cy="10.6" rx="2.2" ry="3" transform="rotate(-40 21.3 10.6)" fill="#fff"/></svg></div>
<div class="r" style="left:59px;top:787px;width:1381px;height:3px;background:#ffffff;"></div>
</body></html>
